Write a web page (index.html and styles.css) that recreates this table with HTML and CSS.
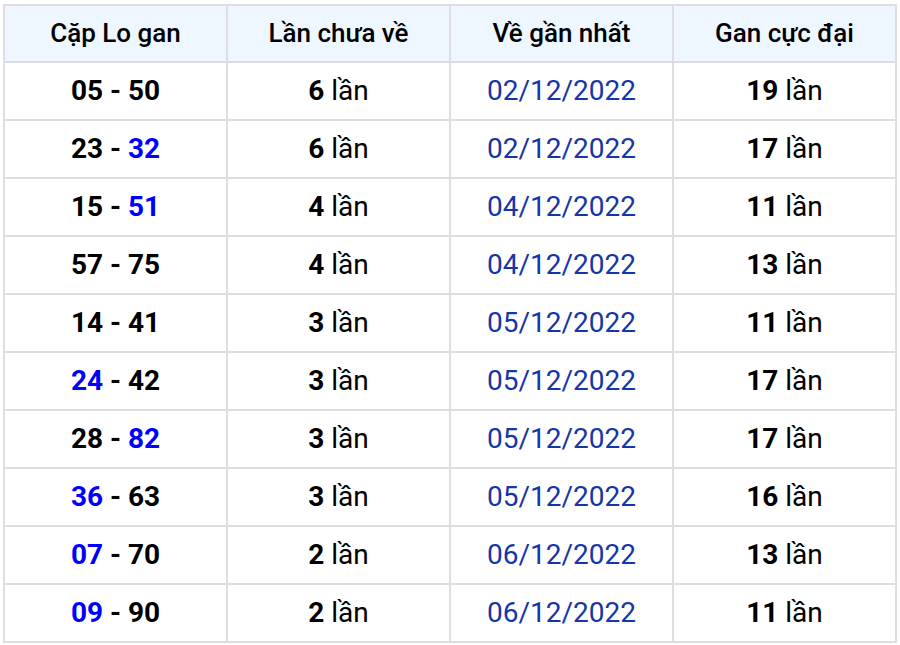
FILE: index.html
```html
<!DOCTYPE html>
<html lang="vi">
<head>
<meta charset="utf-8">
<link rel="stylesheet" href="styles.css">
</head>
<body>
<table class="gan">
  <thead>
    <tr><th>Cặp Lo gan</th><th>Lần chưa về</th><th>Về gần nhất</th><th>Gan cực đại</th></tr>
  </thead>
  <tbody>
    <tr><td class="pair"><b>05</b> - <b>50</b></td><td><b>6</b> lần</td><td class="date">02/12/2022</td><td><b>19</b> lần</td></tr>
    <tr><td class="pair"><b>23</b> - <b class="hl">32</b></td><td><b>6</b> lần</td><td class="date">02/12/2022</td><td><b>17</b> lần</td></tr>
    <tr><td class="pair"><b>15</b> - <b class="hl">51</b></td><td><b>4</b> lần</td><td class="date">04/12/2022</td><td><b>11</b> lần</td></tr>
    <tr><td class="pair"><b>57</b> - <b>75</b></td><td><b>4</b> lần</td><td class="date">04/12/2022</td><td><b>13</b> lần</td></tr>
    <tr><td class="pair"><b>14</b> - <b>41</b></td><td><b>3</b> lần</td><td class="date">05/12/2022</td><td><b>11</b> lần</td></tr>
    <tr><td class="pair"><b class="hl">24</b> - <b>42</b></td><td><b>3</b> lần</td><td class="date">05/12/2022</td><td><b>17</b> lần</td></tr>
    <tr><td class="pair"><b>28</b> - <b class="hl">82</b></td><td><b>3</b> lần</td><td class="date">05/12/2022</td><td><b>17</b> lần</td></tr>
    <tr><td class="pair"><b class="hl">36</b> - <b>63</b></td><td><b>3</b> lần</td><td class="date">05/12/2022</td><td><b>16</b> lần</td></tr>
    <tr><td class="pair"><b class="hl">07</b> - <b>70</b></td><td><b>2</b> lần</td><td class="date">06/12/2022</td><td><b>13</b> lần</td></tr>
    <tr><td class="pair"><b class="hl">09</b> - <b>90</b></td><td><b>2</b> lần</td><td class="date">06/12/2022</td><td><b>11</b> lần</td></tr>
  </tbody>
</table>
</body>
</html>
```
FILE: styles.css
```css
html, body {
  margin: 0;
  padding: 0;
  background: #fff;
}
body {
  padding: 4px 3px;
  font-family: Roboto, "Liberation Sans", sans-serif;
  color: #000;
}
.gan {
  border-collapse: collapse;
  width: 894px;
  table-layout: fixed;
}
.gan th, .gan td {
  border: 2px solid #dddde2;
  text-align: center;
  padding: 0;
}
.gan th {
  background: #eef6ff;
  font-weight: 500;
  font-size: 26px;
  height: 54px;
  padding-bottom: 1px;
}
.gan td {
  font-size: 28px;
  height: 54px;
  padding-bottom: 2px;
}
.gan td b {
  font-weight: 700;
}
.pair {
  font-weight: 700;
}
.hl {
  color: #0000ff;
}
.date {
  color: #1535a8;
}
```
